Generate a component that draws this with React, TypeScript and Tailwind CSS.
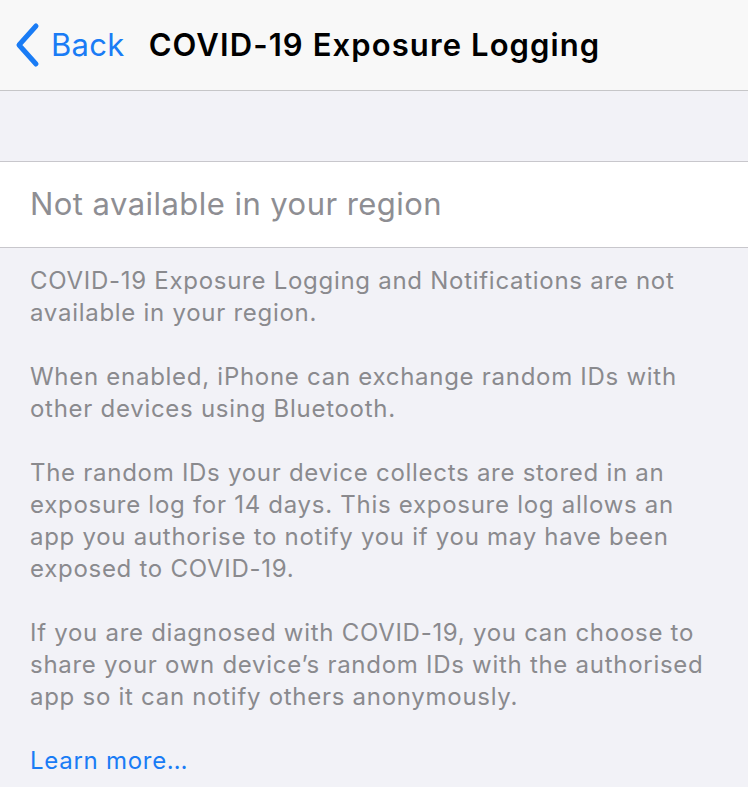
export default function App() {
  const paragraphs = [
    ['COVID-19 Exposure Logging and Notifications are not', 'available in your region.'],
    ['When enabled, iPhone can exchange random IDs with', 'other devices using Bluetooth.'],
    [
      'The random IDs your device collects are stored in an',
      'exposure log for 14 days. This exposure log allows an',
      'app you authorise to notify you if you may have been',
      'exposed to COVID-19.',
    ],
    [
      'If you are diagnosed with COVID-19, you can choose to',
      'share your own device\u2019s random IDs with the authorised',
      'app so it can notify others anonymously.',
    ],
  ];

  return (
    <div className="min-h-screen w-[748px] bg-[#f2f2f7] font-['Inter',sans-serif] overflow-hidden">
      {/* Nav bar */}
      <div className="h-[91px] bg-[#f8f8f8] border-b border-[#c6c6c8] flex items-center">
        <svg width="28" height="46" viewBox="0 0 28 46" className="ml-[14px]">
          <path d="M22 4 L5 23 L22 42" fill="none" stroke="#1a7cf5" strokeWidth="5" strokeLinecap="round" strokeLinejoin="round" />
        </svg>
        <span className="ml-[9px] text-[31px] text-[#1a7cf5] tracking-[0.3px]">Back</span>
        <span className="ml-[24px] text-[31px] font-semibold text-black tracking-[1.1px]">COVID-19 Exposure Logging</span>
      </div>

      <div className="h-[70px]" />

      {/* Cell */}
      <div className="h-[87px] bg-white border-y border-[#c8c7cc] flex items-center px-[30px]">
        <span className="text-[31px] text-[#8e8e93] tracking-[0.45px]">Not available in your region</span>
      </div>

      {/* Footer */}
      <div className="px-[30px] pt-[17px] text-[24px] leading-[32px] text-[#8a8a8e] tracking-[0.72px]">
        {paragraphs.map((lines) => (
          <p key={lines[0]} className="mb-[32px]">
            {lines.map((line) => (
              <span key={line} className="block whitespace-nowrap">{line}</span>
            ))}
          </p>
        ))}
        <p className="text-[#1a7cf5]">Learn more…</p>
      </div>
    </div>
  );
}
